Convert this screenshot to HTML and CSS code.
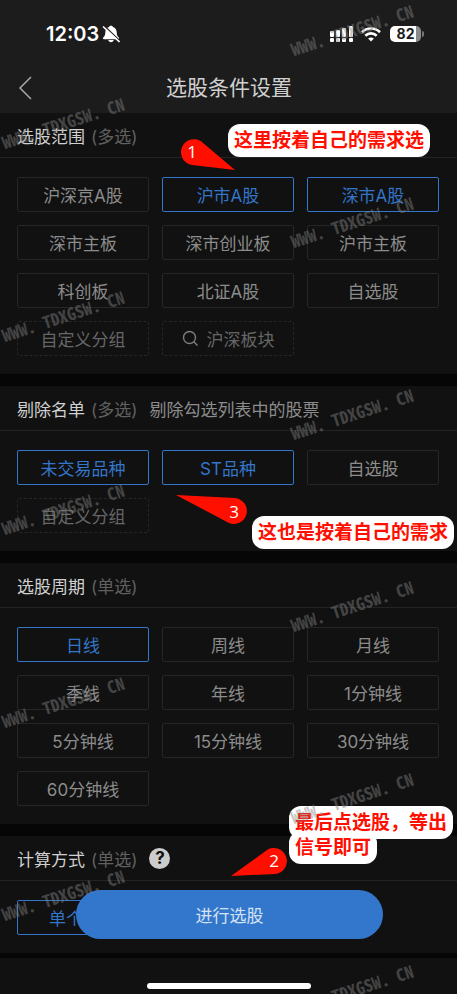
FILE: index.html
```
<!DOCTYPE html>
<html lang="zh-CN">
<head>
    <meta charset="UTF-8">
    <meta name="viewport" content="width=device-width, initial-scale=1.0">
    <title>选股条件设置</title>
    <link rel="stylesheet" href="styles.css">
</head>
<body>
    <header class="top">
        <div class="status">
            <span class="time">12:03</span>
            <svg class="bell" width="18" height="18" viewBox="0 0 18 18">
                <path d="M9 .8C7.800.8 7.200 1.400 7 2.100 4.600 2.900 3.400 4.900 3.300 7.500c-.1 2.700-.8 3.700-1.900 4.700-.8.800-.5 2 .7 2h13.800c1.200 0 1.500-1.200.7-2-1.100-1-1.800-2-1.900-4.700-.1-2.600-1.300-4.600-3.700-5.400C10.800 1.400 10.200.8 9 .8z" fill="#fff"/>
                <path d="M6.300 15h5.400c-.3 1.400-1.400 2.200-2.700 2.200S6.600 16.400 6.300 15z" fill="#fff"/>
                <path d="M2.500 1l15 14.500" stroke="#1c1c1c" stroke-width="1.200"/>
                <path d="M1 1.500l16.500 15.500" stroke="#fff" stroke-width="1.600"/>
            </svg>
            <span class="spacer"></span>
            <svg class="signal" width="24" height="17" viewBox="0 0 24 17" fill="#fff">
                <rect x="0" y="5" width="4" height="6" rx="1"/>
                <rect x="6" y="4" width="4" height="7" rx="1"/>
                <rect x="12" y="2" width="4" height="9" rx="1"/>
                <rect x="19" y="0" width="4" height="11" rx="1"/>
                <rect x="0" y="12" width="4" height="4" rx="1"/>
                <rect x="6" y="12" width="4" height="4" rx="1"/>
                <rect x="12" y="12" width="4" height="4" rx="1"/>
                <rect x="19" y="12" width="4" height="4" rx="1"/>
            </svg>
            <svg class="wifi" width="20" height="15" viewBox="0 0 20 15" fill="none" stroke="#fff" stroke-width="2.600">
                <path d="M1 5.200c5-4.900 13-4.900 18 0"/>
                <path d="M4.300 8.700c3.200-3.100 8.200-3.100 11.400 0"/>
                <path d="M10 14.500l-2.900-3c1.600-1.500 4.200-1.500 5.800 0z" fill="#fff" stroke="none"/>
            </svg>
            <span class="battery">82</span>
        </div>
        <div class="navbar">
            <a class="back" href="#" aria-label="返回">
                <svg width="14" height="24" viewBox="0 0 14 24" fill="none" stroke="#a8a8a8" stroke-width="1.500">
                    <path d="M13 1L2 12l11 11"/>
                </svg>
            </a>
            <h1>选股条件设置</h1>
        </div>
    </header>

    <main>
        <section class="panel">
            <h2>选股范围 <small>(多选)</small></h2>
            <div class="options">
                <label class="chip"><input type="checkbox" name="range">沪深京A股</label>
                <label class="chip"><input type="checkbox" name="range" checked>沪市A股</label>
                <label class="chip"><input type="checkbox" name="range" checked>深市A股</label>
                <label class="chip"><input type="checkbox" name="range">深市主板</label>
                <label class="chip"><input type="checkbox" name="range">深市创业板</label>
                <label class="chip"><input type="checkbox" name="range">沪市主板</label>
                <label class="chip"><input type="checkbox" name="range">科创板</label>
                <label class="chip"><input type="checkbox" name="range">北证A股</label>
                <label class="chip"><input type="checkbox" name="range">自选股</label>
                <button class="chip dashed">自定义分组</button>
                <button class="chip dashed">
                    <svg width="17" height="17" viewBox="0 0 17 17" fill="none" stroke="#7c7c7c" stroke-width="1.400">
                        <circle cx="7.500" cy="7.500" r="6"/>
                        <path d="M11.800 11.800l3.700 3.700"/>
                    </svg>
                    沪深板块
                </button>
            </div>
            <svg class="pin pin-one" width="56" height="33" viewBox="0 0 56 33">
                <path d="M22 3.200A13 13 0 1 0 13 27L56 32z" fill="#ff0f00"/>
                <text x="13" y="20">1</text>
            </svg>
            <p class="note note-one"><span>这里按着自己的需求选</span></p>
        </section>

        <section class="panel">
            <h2>剔除名单 <small>(多选)</small> <em>剔除勾选列表中的股票</em></h2>
            <div class="options">
                <label class="chip"><input type="checkbox" name="exclude" checked>未交易品种</label>
                <label class="chip"><input type="checkbox" name="exclude" checked>ST品种</label>
                <label class="chip"><input type="checkbox" name="exclude">自选股</label>
                <button class="chip dashed">自定义分组</button>
            </div>
            <svg class="pin pin-three" width="72" height="30" viewBox="0 0 72 30">
                <path d="M0 0L59 3A13 13 0 1 1 53 28z" fill="#ff0f00"/>
                <text x="58" y="23">3</text>
            </svg>
            <p class="note note-three"><span>这也是按着自己的需求</span></p>
        </section>

        <section class="panel">
            <h2>选股周期 <small>(单选)</small></h2>
            <div class="options">
                <label class="chip"><input type="radio" name="period" checked>日线</label>
                <label class="chip"><input type="radio" name="period">周线</label>
                <label class="chip"><input type="radio" name="period">月线</label>
                <label class="chip"><input type="radio" name="period">季线</label>
                <label class="chip"><input type="radio" name="period">年线</label>
                <label class="chip"><input type="radio" name="period">1分钟线</label>
                <label class="chip"><input type="radio" name="period">5分钟线</label>
                <label class="chip"><input type="radio" name="period">15分钟线</label>
                <label class="chip"><input type="radio" name="period">30分钟线</label>
                <label class="chip"><input type="radio" name="period">60分钟线</label>
            </div>
        </section>

        <section class="panel">
            <h2>计算方式 <small>(单选)</small> <button class="help" aria-label="帮助">?</button></h2>
            <div class="options">
                <label class="chip start"><input type="radio" name="mode" checked>单个</label>
            </div>
            <svg class="pin pin-two" width="57" height="30" viewBox="0 0 57 30">
                <path d="M0 29L36 3A13 13 0 1 1 44 27z" fill="#ff0f00"/>
                <text x="43" y="20">2</text>
            </svg>
            <p class="note note-two"><span>最后点选股，等出信号即可</span></p>
            <button class="submit">进行选股</button>
        </section>
    </main>

    <footer class="bottom"><span class="home"></span></footer>

    <div class="watermarks" aria-hidden="true">
        <div class="marks left">
            <span>WWW. TDXGSW. CN</span>
            <span>WWW. TDXGSW. CN</span>
            <span>WWW. TDXGSW. CN</span>
            <span>WWW. TDXGSW. CN</span>
            <span>WWW. TDXGSW. CN</span>
        </div>
        <div class="marks right">
            <span>WWW. TDXGSW. CN</span>
            <span>WWW. TDXGSW. CN</span>
            <span>WWW. TDXGSW. CN</span>
            <span>WWW. TDXGSW. CN</span>
            <span>WWW. TDXGSW. CN</span>
            <span>WWW. TDXGSW. CN</span>
        </div>
    </div>
</body>
</html>
```
FILE: styles.css
```
* {
    box-sizing: border-box;
}
body {
    position: relative;
    display: flex;
    flex-direction: column;
    min-height: 100vh;
    margin: 0;
    background: #060606;
    color: #8c8c8c;
    font-family: Inter, "Noto Sans CJK SC", sans-serif;
    font-size: 17px;
}
button {
    font: inherit;
    cursor: pointer;
}

/* status bar and title */
.top {
    background: #1c1c1c;
    height: 113px;
}
.status {
    display: flex;
    align-items: center;
    height: 64px;
    padding: 4px 36px 0 46px;
    color: #fff;
}
.time {
    font-size: 20px;
    font-weight: 600;
}
.bell {
    margin-left: 3px;
}
.spacer {
    flex: 1;
}
.signal {
    margin-right: 7px;
}
.wifi {
    margin-right: 9px;
}
.battery {
    position: relative;
    width: 31px;
    height: 16px;
    border-radius: 5px;
    background: linear-gradient(to right, #fff 84%, #8a8a8a 84%);
    color: #1c1c1c;
    font-size: 14px;
    font-weight: 700;
    line-height: 16px;
    text-align: center;
}
.battery::after {
    content: "";
    position: absolute;
    left: 32px;
    top: 5px;
    width: 2px;
    height: 6px;
    border-radius: 0 2px 2px 0;
    background: #777;
}
.navbar {
    display: grid;
    grid-template-columns: 40px 1fr 40px;
    align-items: center;
    height: 48px;
    padding: 0 17px 0 18px;
}
.back {
    display: flex;
}
h1 {
    margin: 0;
    color: #d0d0d0;
    font-size: 21px;
    font-weight: 400;
    line-height: 30px;
    text-align: center;
}

/* option groups */
.panel {
    position: relative;
    margin-bottom: 12px;
    background: #111;
}
.panel:last-child {
    margin-bottom: 5px;
}
h2 {
    display: flex;
    align-items: center;
    gap: 6px;
    height: 45px;
    margin: 0;
    padding: 0 17px;
    border-bottom: 1px solid #242424;
    color: #d0d0d0;
    font-size: 17px;
    font-weight: 400;
}
h2 small {
    color: #606060;
    font-size: 17px;
}
h2 em {
    margin-left: 6px;
    color: #8c8c8c;
    font-style: normal;
}
.help {
    width: 21px;
    height: 21px;
    margin-left: 6px;
    padding: 0;
    border: none;
    border-radius: 50%;
    background: #ccc;
    color: #111;
    font-size: 17px;
    font-weight: 700;
    line-height: 21px;
}
.options {
    display: grid;
    grid-template-columns: repeat(3, 1fr);
    gap: 13px;
    padding: 19px 18px 18px 17px;
}
.chip {
    display: flex;
    align-items: center;
    justify-content: center;
    gap: 8px;
    height: 35px;
    padding: 0;
    border: 1px solid #262626;
    border-radius: 2px;
    background: none;
    color: #8c8c8c;
    cursor: pointer;
}
.chip input {
    position: absolute;
    opacity: 0;
}
.chip:has(input:checked) {
    border-color: #3275c9;
    color: #3275c9;
}
.dashed {
    border-style: dashed;
    color: #666;
}
.start {
    justify-content: flex-start;
    padding-left: 31px;
}
.submit {
    position: absolute;
    left: 76px;
    right: 74px;
    bottom: 14px;
    height: 49px;
    border: none;
    border-radius: 25px;
    background: #3377cc;
    color: #d5e2f3;
}
.bottom {
    display: flex;
    flex: 1;
    align-items: flex-end;
    justify-content: center;
    min-height: 36px;
    padding-bottom: 5px;
    background: #111;
}
.home {
    width: 164px;
    height: 6px;
    border-radius: 3px;
    background: #fff;
}

/* red notes over the panels */
.note {
    position: absolute;
    margin: 0;
    color: #ff0f00;
    font-size: 19px;
    font-weight: 700;
    line-height: 25px;
}
.note span {
    padding: 5px 6px;
    border-radius: 12px;
    background: #fff;
    box-decoration-break: clone;
    -webkit-box-decoration-break: clone;
}
.note-one {
    top: 15px;
    right: 27px;
}
.note-two {
    top: -26px;
    right: 4px;
    width: 164px;
}
.note-three {
    top: 134px;
    right: 3px;
}
.pin {
    position: absolute;
}
.pin text {
    fill: #fff;
    font-family: "Open Sans", sans-serif;
    font-size: 17px;
    text-anchor: middle;
}
.pin-one {
    top: 25px;
    left: 179px;
}
.pin-two {
    top: 11px;
    left: 231px;
}
.pin-three {
    top: 109px;
    left: 176px;
}

/* site watermark */
.watermarks {
    position: absolute;
    inset: 0;
    display: flex;
    justify-content: space-between;
    overflow: hidden;
    pointer-events: none;
}
.marks {
    display: flex;
    flex-direction: column;
    width: 134px;
    color: #828282;
    font-family: "Noto Sans Mono CJK SC", "Liberation Mono", monospace;
    font-size: 17px;
    font-weight: 700;
    line-height: 20px;
    white-space: pre;
    opacity: 0.45;
}
.marks span {
    flex: none;
    height: 20px;
    text-align: center;
    transform: rotate(-18deg);
}
.left {
    gap: 173px;
    margin-left: -4px;
    padding-top: 113px;
}
.right {
    gap: 172px;
    margin-right: 38px;
    padding-top: 20px;
}
```
